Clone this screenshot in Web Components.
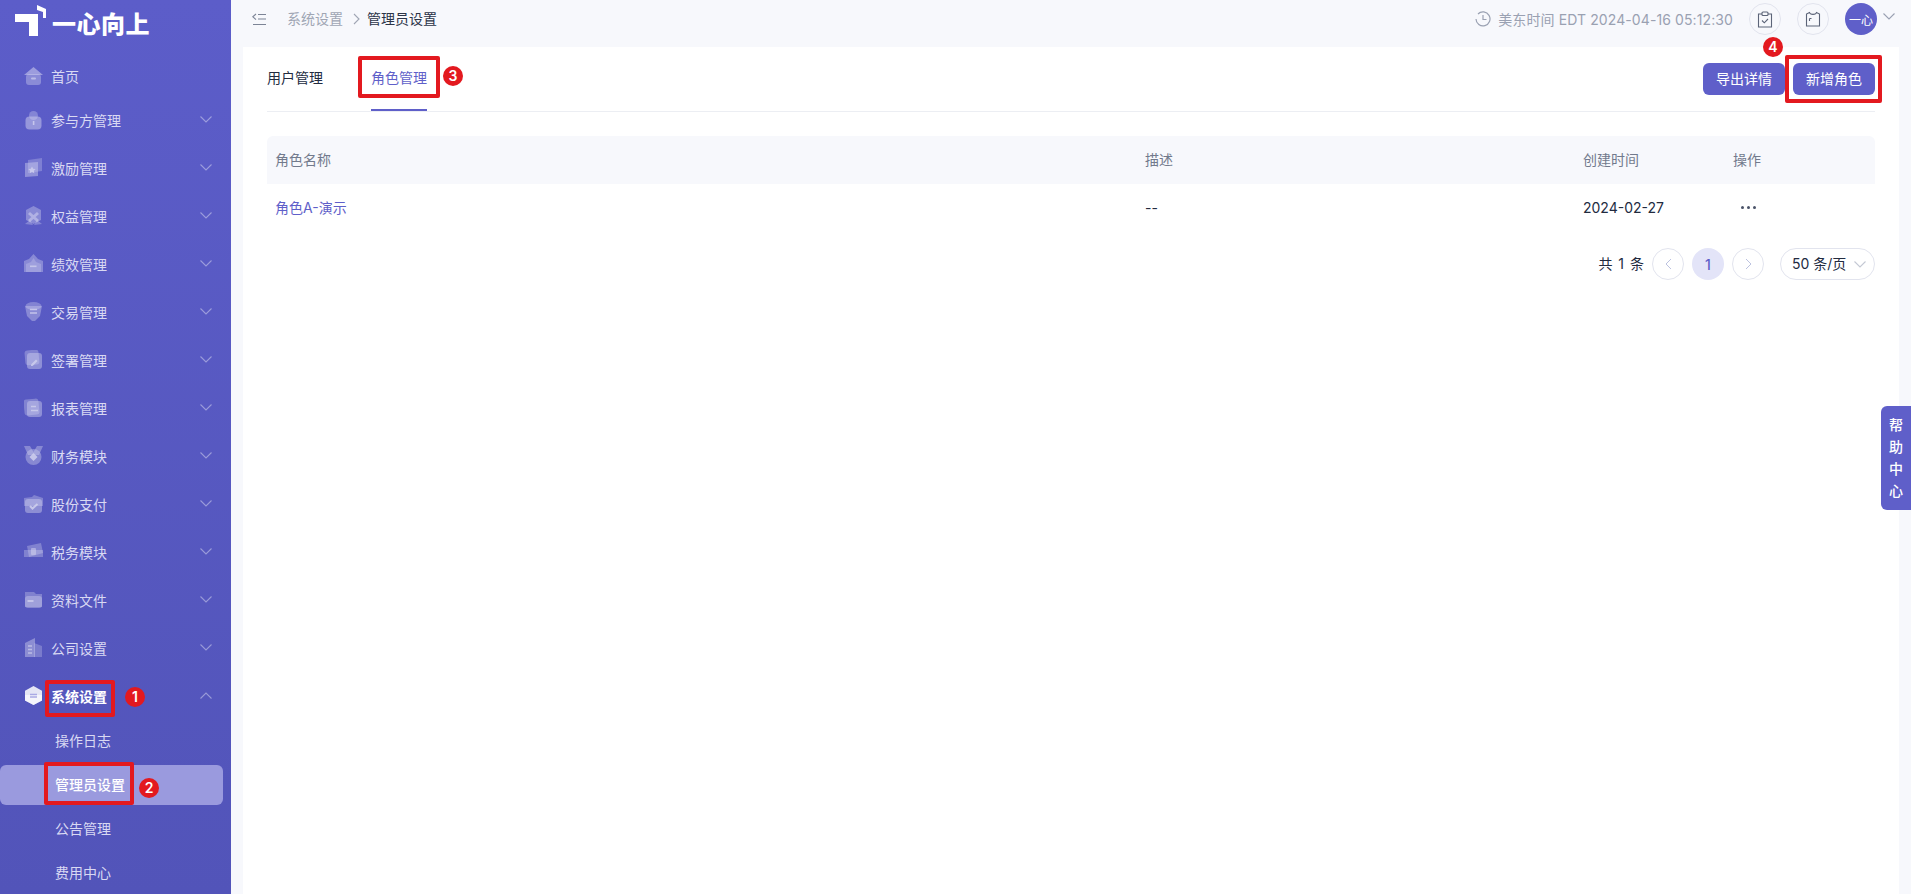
<!DOCTYPE html>
<html lang="zh-CN">
<head>
<meta charset="utf-8">
<title>管理员设置</title>
<style>
  html, body { margin: 0; height: 894px; overflow: hidden; background: #f7f8fc; }
  body { font-family: Inter, "Noto Sans CJK SC", sans-serif; font-size: 14px; }
</style>
</head>
<body>
<app-shell>
  <side-nav slot="side">
    <nav-item icon="home">首页</nav-item>
    <nav-item icon="people" arrow>参与方管理</nav-item>
    <nav-item icon="flag" arrow>激励管理</nav-item>
    <nav-item icon="shield" arrow>权益管理</nav-item>
    <nav-item icon="crown" arrow>绩效管理</nav-item>
    <nav-item icon="swap" arrow>交易管理</nav-item>
    <nav-item icon="pen" arrow>签署管理</nav-item>
    <nav-item icon="report" arrow>报表管理</nav-item>
    <nav-item icon="medal" arrow>财务模块</nav-item>
    <nav-item icon="check" arrow>股份支付</nav-item>
    <nav-item icon="ticket" arrow>税务模块</nav-item>
    <nav-item icon="folder" arrow>资料文件</nav-item>
    <nav-item icon="company" arrow>公司设置</nav-item>
    <nav-item icon="system" arrow open>系统设置</nav-item>
    <sub-item>操作日志</sub-item>
    <sub-item active>管理员设置</sub-item>
    <sub-item>公告管理</sub-item>
    <sub-item>费用中心</sub-item>
  </side-nav>
  <top-bar slot="top"></top-bar>
  <role-panel slot="main"></role-panel>
</app-shell>
<help-tab>帮助中心</help-tab>

<!-- red tutorial marks drawn over the screenshot -->
<mark-box style="left:45px;top:680px;width:70px;height:37px"></mark-box>
<mark-box style="left:44px;top:762px;width:90px;height:43px"></mark-box>
<mark-box style="left:358px;top:56px;width:82px;height:42px"></mark-box>
<mark-box style="left:1785px;top:55px;width:97px;height:48px"></mark-box>
<mark-num style="left:125px;top:687px">1</mark-num>
<mark-num style="left:139px;top:778px">2</mark-num>
<mark-num style="left:443px;top:66px">3</mark-num>
<mark-num style="left:1763px;top:37px">4</mark-num>

<script>
const ICONS = {
  home: '<path d="M0 9 9.500 1 19 9Z" opacity=".55"/><rect x="2" y="8" width="15" height="11" rx="3" opacity=".4"/><rect x="7" y="11.500" width="5" height="2" rx="1" opacity=".7"/>',
  people: '<circle cx="9.500" cy="5.500" r="4.500" opacity=".35"/><rect x="1.500" y="6.500" width="16" height="13" rx="4" opacity=".5"/><rect x="8.800" y="11" width="1.600" height="4" opacity=".8"/>',
  flag: '<path d="M4 2 18 0V13L4 15Z" opacity=".3"/><path d="M1 5 14 4V18L1 19Z" opacity=".45"/><path d="m8 8.500 1.200 2.300 2.500.3-1.800 1.700.4 2.400-2.300-1.200-2.300 1.200.4-2.400-1.800-1.700 2.500-.3Z" opacity=".8"/>',
  shield: '<path d="M9.500 0 17 4V14L9.500 18 2 14V4Z" opacity=".4"/><path d="M5 7 14 15M14 7 5 15" stroke="#fff" stroke-width="3" opacity=".55"/><path d="M1 18 6 14 9 19ZM18 18 13 14 10 19Z" opacity=".35"/>',
  crown: '<path d="M0 7 5 5 9.500 0 14 5 19 7V18H0Z" opacity=".4"/><path d="M2 10 7 8 9.500 4 12 8 17 10V18H2Z" opacity=".3"/><rect x="6" y="11.500" width="6.500" height="1.600" opacity=".75"/>',
  swap: '<ellipse cx="9.500" cy="4" rx="8" ry="4" opacity=".35"/><path d="M1 4H18L16 14 11 19H8L3 14Z" opacity=".4"/><path d="M6 7.500H13M6 11H13" stroke="#fff" stroke-width="1.300" opacity=".8"/>',
  pen: '<rect x="1" y="0" width="14" height="15" rx="3" opacity=".35" transform="rotate(-5 8 8)"/><rect x="3" y="3" width="15" height="16" rx="3" opacity=".45"/><path d="m7 14.500 5-5 1.600 1.600-5 5H7Z" opacity=".8"/>',
  report: '<rect x="0" y="1" width="15" height="16" rx="3" opacity=".35" transform="rotate(-6 8 9)"/><rect x="3" y="3" width="15" height="16" rx="3" opacity=".45"/><path d="M7 8.500H12M7 12.500H14" stroke="#fff" stroke-width="1.500" opacity=".8"/>',
  medal: '<path d="M0 0H6L9.500 6 13 0H19L15 9H4Z" opacity=".4"/><circle cx="9.500" cy="11" r="8" opacity=".4"/><path d="m9.500 7 4 4-4 4-4-4Z" opacity=".85"/>',
  check: '<path d="M0 4 8 3 10 1 19 4V12H0Z" opacity=".35"/><rect x="1" y="5" width="17" height="14" rx="3" opacity=".45"/><path d="m6 12 2.500 2.500 5-4.500" fill="none" stroke="#fff" stroke-width="2" opacity=".85"/>',
  ticket: '<path d="M3 4 17 1 19 11 5 15Z" opacity=".35"/><path d="M0 8H19V15H0Z" opacity=".35"/><rect x="7" y="6" width="5" height="7" rx="1" opacity=".55"/>',
  folder: '<path d="M1 2H10L12 4H18V17H1Z" opacity=".35"/><rect x="1" y="6" width="17" height="12" rx="3" opacity=".4"/><rect x="3.500" y="10" width="6" height="2" opacity=".75"/>',
  company: '<path d="M1 5 11 0V19H1Z" opacity=".45"/><path d="M10 5 18 8V19H10Z" opacity=".3"/><path d="M4 8H8M4 11.500H8M4 15H8" stroke="#fff" stroke-width="1.300" opacity=".7"/>',
  system: '<path d="M9.500 0 18 4.800V14.500L9.500 19 1 14.500V4.800Z" opacity=".85"/><path d="M1 9H18V14.500L9.500 19 1 14.500Z" opacity=".6"/><path d="M6 8.500H13M6 11H13" stroke="#a9a9e4" stroke-width="1.300"/>'
};

function shadow(el, html) {
  el.attachShadow({ mode: 'open' }).innerHTML = html;
}

const chevron = (up) => `<svg width="12" height="7" viewBox="0 0 12 7" fill="none" stroke="currentColor" stroke-width="1.100"><path d="${up ? 'M.5 6.500 6 1l5.500 5.500' : 'M.5.5 6 6 11.500.5'}"/></svg>`;

class AppShell extends HTMLElement {
  constructor() {
    super();
    shadow(this, `<style>
      :host { display: flex; height: 894px; overflow: hidden; }
      .main { flex: 1; min-width: 0; display: flex; flex-direction: column; padding: 0 12px; }
    </style>
    <slot name="side"></slot>
    <div class="main"><slot name="top"></slot><slot name="main"></slot></div>`);
  }
}

class SideNav extends HTMLElement {
  constructor() {
    super();
    shadow(this, `<style>
      :host { display: block; flex: none; width: 231px; height: 894px; overflow: hidden;
        background: linear-gradient(#5c5dc9, #5254b9); }
      .logo { display: flex; align-items: center; height: 57px; padding-left: 15px; box-sizing: border-box; }
      .logo svg { flex: none; margin: -17px 5px 0 0; }
      .logo span { margin-top: -11px; color: #fff; font: 900 24px/30px "Noto Sans CJK SC", sans-serif; letter-spacing: .5px; }
      .list { display: flex; flex-direction: column; gap: 8px; }
      ::slotted(nav-item:first-child) { margin-bottom: -4px; }
      ::slotted(sub-item) { margin-top: -4px; }
    </style>
    <div class="logo">
      <svg width="32" height="31" viewBox="0 0 32 31" fill="#fff"><path d="M0 9H23V31H14V17H0Z"/><path d="M22 0 31 4V13H28V7L22 5Z"/></svg>
      <span>一心向上</span>
    </div>
    <div class="list"><slot></slot></div>`);
  }
}

class NavItem extends HTMLElement {
  constructor() {
    super();
    const open = this.hasAttribute('open');
    const arrow = this.hasAttribute('arrow') ? chevron(open) : '';
    shadow(this, `<style>
      :host { display: flex; align-items: center; height: 40px; box-sizing: border-box; padding: 0 0 2px 24px; color: #d9d9f3;
        font-family: "Noto Sans CJK SC", sans-serif; position: relative; }
      :host([open]) { color: #fff; font-weight: 700; }
      svg.ic { flex: none; margin-right: 7px; fill: #fff; opacity: .72; filter: blur(.35px); }
      :host([open]) svg.ic { opacity: 1; }
      .ar { position: absolute; left: 200px; top: 15px; display: flex; color: rgba(255,255,255,.4); }
    </style>
    <svg class="ic" width="20" height="20" viewBox="0 0 20 20">${ICONS[this.getAttribute('icon')] || ''}</svg>
    <slot></slot><span class="ar">${arrow}</span>`);
  }
}

class SubItem extends HTMLElement {
  constructor() {
    super();
    shadow(this, `<style>
      :host { display: flex; align-items: center; height: 40px; width: 223px; box-sizing: border-box;
        padding: 0 0 2px 55px; border-radius: 6px; color: #d9d9f3; font-family: "Noto Sans CJK SC", sans-serif; }
      :host([active]) { background: #9a9ade; color: #fff; font-weight: 500; }
    </style><slot></slot>`);
  }
}

class TopBar extends HTMLElement {
  constructor() {
    super();
    shadow(this, `<style>
      :host { display: flex; align-items: center; flex: none; height: 38px; margin-bottom: 9px; padding: 0 4px 0 9px;
        color: #9aa1b2; }
      .tog { flex: none; margin-right: 20px; }
      .crumb { color: #a0a6b4; position: relative; top: -1px; }
      .sep { margin: 0 7px 0 10px; display: flex; color: #a0a6b4; }
      .cur { color: #2b3448; position: relative; top: -1px; }
      .time { margin-left: auto; display: flex; align-items: center; gap: 7px; font-size: 14px; letter-spacing: .1px; }
      .rd { flex: none; width: 32px; height: 32px; border: 1px solid #e2e4ee; border-radius: 50%; box-sizing: border-box;
        display: flex; align-items: center; justify-content: center; margin-left: 16px; color: #5c6478; }
      .av { flex: none; width: 32px; height: 32px; border-radius: 50%; background: #5f5fc9; color: #fff; margin-left: 16px;
        display: flex; align-items: center; justify-content: center; font-size: 12px; }
      .dn { margin-left: 6px; margin-top: -5px; display: flex; color: #9aa1b2; }
    </style>
    <svg class="tog" width="15" height="13" viewBox="0 0 15 13" fill="none" stroke="#7c8496" stroke-width="1.100">
      <path d="M4 1 .8 3.800 4 6.600M6 1.500H14M6 6H14M1 11.500H14"/>
    </svg>
    <span class="crumb">系统设置</span>
    <span class="sep"><svg width="7" height="12" viewBox="0 0 7 12" fill="none" stroke="currentColor" stroke-width="1.100"><path d="m1 1 5 5-5 5"/></svg></span>
    <span class="cur">管理员设置</span>
    <span class="time">
      <svg width="16" height="16" viewBox="0 0 16 16" fill="none" stroke="#9aa1b2" stroke-width="1.200"><path d="M3 3A7 7 0 1 1 1 8M8 4V8.500H11.500"/></svg>
      美东时间 EDT 2024-04-16 05:12:30
    </span>
    <span class="rd"><svg width="16" height="17" viewBox="0 0 16 17" fill="none" stroke="currentColor" stroke-width="1.100"><path d="M5 3H1.500V16H14.500V3H11"/><rect x="5" y="1" width="6" height="3.500" rx="1"/><path d="m5 9.500 2.300 2.300L11 8"/></svg></span>
    <span class="rd"><svg width="16" height="16" viewBox="0 0 16 16" fill="none" stroke="currentColor" stroke-width="1.100"><path d="M4.500 1.500 1.500 3V15H14.500V3L11.500 1.500C11 4 5 4 4.500 1.500Z"/><path d="M4.500 7.500V10M4.500 7.500H6.500"/></svg></span>
    <span class="av">一心</span>
    <span class="dn">${chevron(false)}</span>`);
  }
}

class RolePanel extends HTMLElement {
  constructor() {
    super();
    shadow(this, `<style>
      :host { display: block; flex: 1; background: #fff; padding: 0 24px; color: #222b3f; }
      .bar { display: flex; align-items: flex-start; height: 64px; border-bottom: 1px solid #eceef3; }
      .tab { height: 64px; box-sizing: border-box; line-height: 60px; margin-right: 48px; font-family: "Noto Sans CJK SC", sans-serif; }
      .tab.on { color: #5f5fc9; border-bottom: 2px solid #5f5fc9; }
      .acts { margin-left: auto; display: flex; gap: 8px; padding-top: 16px; }
      .row { display: grid; grid-template-columns: 870px 438px 150px 1fr; box-sizing: border-box; padding: 0 0 2px 8px; height: 48px; align-items: center; }
      .head { margin-top: 24px; background: #f7f8fc; border-radius: 6px 6px 0 0; color: #727a8c; }
      .link { color: #5f5fc9; }
      .dots { display: flex; gap: 3px; margin-left: 8px; }
      .dots i { width: 3px; height: 3px; border-radius: 50%; background: #4a5368; }
      .pg { display: flex; justify-content: flex-end; align-items: center; margin-top: 16px; height: 32px; gap: 8px; }
      .total { word-spacing: 2px; position: relative; top: -1px; }
      .c { width: 32px; height: 32px; box-sizing: border-box; border: 1px solid #e2e4ee; border-radius: 50%;
        display: flex; align-items: center; justify-content: center; color: #bcc2e0; }
      .c.on { border: 0; background: #e3e4f8; color: #5f5fc9; font-weight: 500; }
      .sel { width: 95px; height: 32px; box-sizing: border-box; border: 1px solid #e2e4ee; border-radius: 16px; margin-left: 8px;
        display: flex; align-items: center; justify-content: space-between; padding: 0 8px 2px 11px; white-space: nowrap; }
      .sel span { display: flex; color: #c4c8d4; margin-top: 2px; }
    </style>
    <div class="bar">
      <div class="tab">用户管理</div>
      <div class="tab on">角色管理</div>
      <div class="acts"><role-button>导出详情</role-button><role-button>新增角色</role-button></div>
    </div>
    <div class="row head"><div>角色名称</div><div>描述</div><div>创建时间</div><div>操作</div></div>
    <div class="row">
      <div class="link">角色A-演示</div><div>--</div><div>2024-02-27</div>
      <div class="dots"><i></i><i></i><i></i></div>
    </div>
    <div class="pg">
      <span class="total">共 1 条</span>
      <span class="c"><svg width="7" height="12" viewBox="0 0 7 12" fill="none" stroke="currentColor"><path d="M6 1 1 6l5 5"/></svg></span>
      <span class="c on">1</span>
      <span class="c"><svg width="7" height="12" viewBox="0 0 7 12" fill="none" stroke="currentColor"><path d="m1 1 5 5-5 5"/></svg></span>
      <div class="sel">50 条/页<span>${chevron(false)}</span></div>
    </div>`);
  }
}

class RoleButton extends HTMLElement {
  constructor() {
    super();
    shadow(this, `<style>
      :host { display: flex; align-items: center; justify-content: center; width: 82px; height: 32px; border-radius: 6px;
        box-sizing: border-box; padding-bottom: 2px;
        background: #5f5fc9; color: #fff; font-family: "Noto Sans CJK SC", sans-serif; }
    </style><slot></slot>`);
  }
}

class HelpTab extends HTMLElement {
  constructor() {
    super();
    shadow(this, `<style>
      :host { position: fixed; right: 0; top: 406px; width: 30px; height: 104px; box-sizing: border-box; padding-top: 8px;
        border-radius: 6px 0 0 6px;
        background: #5f5fc9; color: #fff; display: flex; align-items: center; justify-content: center;
        font: 500 14px/30px "Noto Sans CJK SC", sans-serif; writing-mode: vertical-rl; letter-spacing: 8px; }
    </style><slot></slot>`);
  }
}

class MarkBox extends HTMLElement {
  constructor() {
    super();
    shadow(this, `<style>
      :host { position: absolute; box-sizing: border-box; border: 4px solid #e3191f; border-radius: 2px; }
    </style>`);
  }
}

class MarkNum extends HTMLElement {
  constructor() {
    super();
    shadow(this, `<style>
      :host { position: absolute; width: 20px; height: 20px; border-radius: 50%; background: #e3191f; color: #fff;
        display: flex; align-items: center; justify-content: center; font: 600 14px/20px Inter, sans-serif; }
    </style><slot></slot>`);
  }
}

customElements.define('app-shell', AppShell);
customElements.define('side-nav', SideNav);
customElements.define('nav-item', NavItem);
customElements.define('sub-item', SubItem);
customElements.define('top-bar', TopBar);
customElements.define('role-panel', RolePanel);
customElements.define('role-button', RoleButton);
customElements.define('help-tab', HelpTab);
customElements.define('mark-box', MarkBox);
customElements.define('mark-num', MarkNum);
</script>
</body>
</html>
